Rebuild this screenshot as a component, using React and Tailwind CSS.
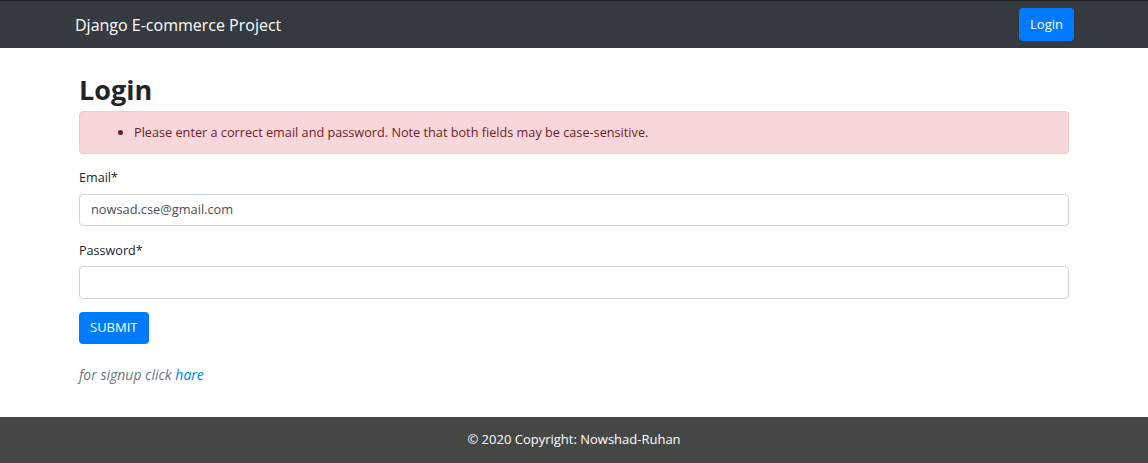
export default function App() {
  const font = { fontFamily: '"Open Sans", "Noto Sans", sans-serif' };
  return (
    <div className="min-h-[463px] flex flex-col bg-white text-[#212529]" style={font}>
      <nav className="h-[48px] bg-[#343a40] border-t border-[#222] flex items-center justify-between pl-[75px] pr-[74px]">
        <span className="text-white text-[16px] leading-none">Django E-commerce Project</span>
        <button className="h-[33px] px-[11px] rounded-[4px] bg-[#007bff] text-white text-[13px]">Login</button>
      </nav>
      <main className="flex-1 px-[79px] pt-[26px] pb-[31px]">
        <h1 className="text-[27px] font-bold leading-[32px] mb-[5px]">Login</h1>
        <div className="h-[43px] bg-[#f8d7da] border border-[#f5c6cb] rounded-[4px] text-[#721c24] text-[12.7px] flex items-center pl-[36px]">
          <ul className="list-disc pl-[18px]">
            <li>Please enter a correct email and password. Note that both fields may be case-sensitive.</li>
          </ul>
        </div>
        <label className="block text-[12.6px] mt-[14px] leading-[20px]">Email*</label>
        <div className="mt-[6px] h-[32px] border border-[#ced4da] rounded-[4px] flex items-center px-[11px] text-[12.8px] text-[#495057]">nowsad.cse@gmail.com</div>
        <label className="block text-[12.6px] mt-[15px] leading-[20px]">Password*</label>
        <div className="mt-[5px] h-[33px] border border-[#ced4da] rounded-[4px]"></div>
        <button className="mt-[13px] h-[32px] px-[11px] rounded-[4px] bg-[#007bff] text-white text-[13px]">SUBMIT</button>
        <p className="mt-[21px] text-[14px] italic text-[#6c757d] leading-[20px]">
          for signup click <a className="text-[#007bff] font-normal">hare</a>
        </p>
      </main>
      <footer className="h-[46px] bg-[#454745] flex items-center justify-center text-white text-[13px]">
        © 2020 Copyright: Nowshad-Ruhan
      </footer>
    </div>
  );
}
